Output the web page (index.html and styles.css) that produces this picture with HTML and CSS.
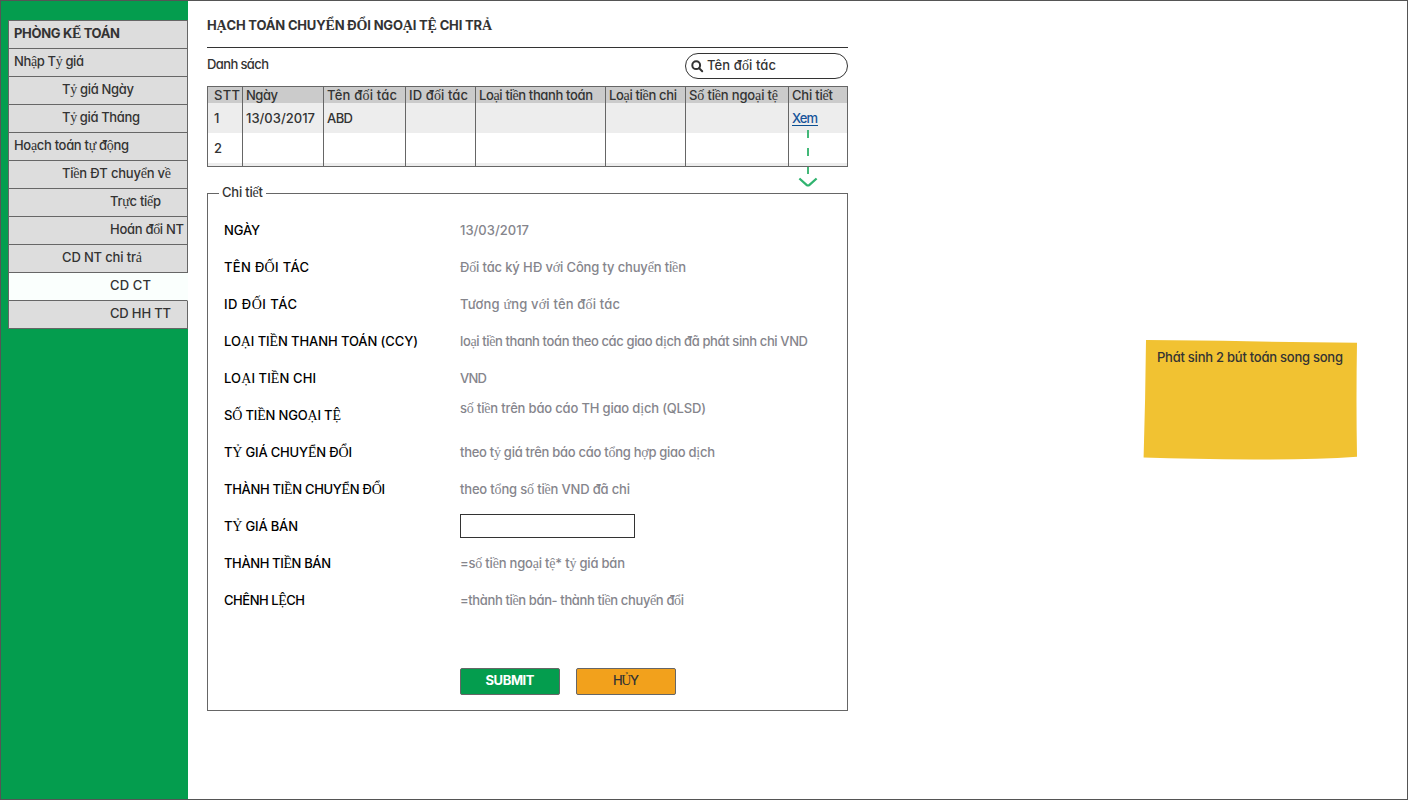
FILE: index.html
```html
<!DOCTYPE html>
<html lang="vi">
<head>
<meta charset="utf-8">
<title>Hạch toán chuyển đổi ngoại tệ chi trả</title>
<link rel="stylesheet" href="styles.css">
</head>
<body>
<div class="page">
  <aside class="sidebar">
    <nav class="menu">
      <div class="item head"><span data-w="106">PHÒNG KẾ TOÁN</span></div>
      <div class="item"><span data-w="70">Nhập Tỷ giá</span></div>
      <div class="item sub"><span data-w="72">Tỷ giá Ngày</span></div>
      <div class="item sub"><span data-w="78">Tỷ giá Tháng</span></div>
      <div class="item"><span data-w="115">Hoạch toán tự động</span></div>
      <div class="item sub"><span data-w="109">Tiền ĐT chuyển về</span></div>
      <div class="item leaf"><span data-w="51">Trực tiếp</span></div>
      <div class="item leaf"><span data-w="74">Hoán đổi NT</span></div>
      <div class="item sub"><span data-w="80">CD NT chi trả</span></div>
      <div class="item leaf active"><span data-w="41">CD CT</span></div>
      <div class="item leaf"><span data-w="61">CD HH TT</span></div>
    </nav>
  </aside>
  <main class="main">
    <h1 class="title"><span data-w="285">HẠCH TOÁN CHUYỂN ĐỔI NGOẠI TỆ CHI TRẢ</span></h1>
    <div class="toolbar">
      <span class="caption" data-w="62">Danh sách</span>
      <div class="search">
        <svg class="glass" viewBox="0 0 13 13"><circle cx="5.2" cy="5.2" r="3.9"/><path d="M8.2 8.2L11.2 11.2"/></svg>
        <span data-w="69">Tên đối tác</span>
      </div>
    </div>
    <div class="table">
      <div class="row header">
        <div><span data-w="26">STT</span></div><div><span data-w="32">Ngày</span></div><div><span data-w="70">Tên đối tác</span></div><div><span data-w="59">ID đối tác</span></div><div><span data-w="114">Loại tiền thanh toán</span></div><div><span data-w="68">Loại tiền chi</span></div><div><span data-w="89">Số tiền ngoại tệ</span></div><div><span data-w="41">Chi tiết</span></div>
      </div>
      <div class="row odd">
        <div>1</div><div><span data-w="69">13/03/2017</span></div><div><span data-w="26">ABD</span></div><div></div><div></div><div></div><div></div><div><a class="link"><span data-w="26">Xem</span></a></div>
      </div>
      <div class="row">
        <div>2</div><div></div><div></div><div></div><div></div><div></div><div></div><div></div>
      </div>
      <div class="row odd last">
        <div></div><div></div><div></div><div></div><div></div><div></div><div></div><div></div>
      </div>
      <svg class="arrow" viewBox="0 0 20 60"><path d="M10 0V8M10 18V26M10 37V44"/><path class="tip" d="M1.4 48.5L8.5 54.8Q10 56 11.5 54.8L18.6 48.5"/></svg>
    </div>
    <section class="detail">
      <div class="legend"><span data-w="41">Chi tiết</span></div>
      <div class="field"><label><span data-w="36">NGÀY</span></label><p><span data-w="69">13/03/2017</span></p></div>
      <div class="field"><label><span data-w="85">TÊN ĐỐI TÁC</span></label><p><span data-w="226">Đối tác ký HĐ với Công ty chuyển tiền</span></p></div>
      <div class="field"><label><span data-w="73">ID ĐỐI TÁC</span></label><p><span data-w="160">Tương ứng với tên đối tác</span></p></div>
      <div class="field"><label><span data-w="194">LOẠI TIỀN THANH TOÁN (CCY)</span></label><p><span data-w="348">loại tiền thanh toán theo các giao dịch đã phát sinh chi VND</span></p></div>
      <div class="field"><label><span data-w="92">LOẠI TIỀN CHI</span></label><p><span data-w="27">VND</span></p></div>
      <div class="field"><label><span data-w="117">SỐ TIỀN NGOẠI TỆ</span></label><p class="raised"><span data-w="246">số tiền trên báo cáo TH giao dịch (QLSD)</span></p></div>
      <div class="field"><label><span data-w="128">TỶ GIÁ CHUYỂN ĐỔI</span></label><p><span data-w="255">theo tỷ giá trên báo cáo tổng hợp giao dịch</span></p></div>
      <div class="field"><label><span data-w="161">THÀNH TIỀN CHUYỂN ĐỔI</span></label><p><span data-w="170">theo tổng số tiền VND đã chi</span></p></div>
      <div class="field"><label><span data-w="74">TỶ GIÁ BÁN</span></label><input class="input" type="text"></div>
      <div class="field"><label><span data-w="107">THÀNH TIỀN BÁN</span></label><p><span data-w="165">=số tiền ngoại tệ* tỷ giá bán</span></p></div>
      <div class="field"><label><span data-w="81">CHÊNH LỆCH</span></label><p><span data-w="224">=thành tiền bán- thành tiền chuyển đổi</span></p></div>
      <div class="actions">
        <button class="btn submit"><span data-w="49">SUBMIT</span></button>
        <button class="btn cancel"><span data-w="26">HỦY</span></button>
      </div>
    </section>
  </main>
  <aside class="notes">
    <div class="note">
      <svg class="paper" viewBox="0 0 216 122"><path d="M3 1L80 1.7Q140 3.4 214 3.7Q213 60 214 117.8Q170 121 110 120.5Q50 120 .6 118.4Q2.4 60 3 1Z"/></svg>
      <span class="note-text" data-w="186">Phát sinh 2 bút toán song song</span>
    </div>
  </aside>
</div>
<script src="main.js"></script>
</body>
</html>
```
FILE: styles.css
```css
* { box-sizing: border-box; }
body {
  margin: 0;
  background: #fff;
  color: #333;
  font: 500 13px/18px Inter, "Liberation Sans", sans-serif;
  font-feature-settings: "cv11" 1;
}
h1, p { margin: 0; font-size: inherit; }
span { white-space: nowrap; }
.alt { font-family: "Liberation Serif", serif; font-size: 14px; font-weight: 400; line-height: 1; }
.page {
  display: flex;
  width: 1408px;
  height: 800px;
  border: 1px solid #555;
  overflow: hidden;
}
.sidebar { width: 187px; padding: 19px 0 0 7px; background: #049d4e; }
.menu { border: solid #666; border-width: 1px 0 0 1px; }
.item {
  height: 28px;
  padding: 3px 0 0 5px;
  background: #ddd;
  border: solid #666;
  border-width: 0 1px 1px 0;
}
.item.head { font-weight: 700; }
.item.sub { padding-left: 53px; }
.item.leaf { padding-left: 101px; }
.item.active { background: #fafffd; border-right-color: #fafffd; }
.main { width: 641px; margin-left: 19px; }
.title {
  height: 47px;
  padding-top: 15px;
  border-bottom: 1px solid #333;
  font-weight: 700;
}
.head .alt, .title .alt { font-weight: 700; }
.toolbar { display: flex; justify-content: space-between; height: 38px; padding-top: 5px; }
.caption { padding-top: 2px; }
.search {
  display: flex;
  gap: 3px;
  width: 163px;
  height: 26px;
  padding: 2px 0 0 5px;
  border: 1px solid #333;
  border-radius: 13px;
}
.glass { width: 13px; height: 13px; margin-top: 4px; fill: none; stroke: #333; stroke-width: 2; stroke-linecap: round; }
.table { position: relative; height: 81px; border: 1px solid #666; border-left: 0; }
.row {
  display: grid;
  grid-template-columns: 35px 81px 82px 70px 130px 80px 103px 59px;
  height: 30px;
  line-height: 30px;
}
.row > div { padding-left: 3px; border-left: 1px solid #666; }
.row > div:first-child { padding-left: 6px; }
.row.odd { background: #ededed; }
.row.header { height: 16px; line-height: 17px; background: #cbcbcb; }
.row.last { height: 3px; }
.link { display: inline-block; height: 23px; line-height: 30px; border-bottom: 1px solid #0b4f91; color: #17549a; vertical-align: top; }
.arrow { position: absolute; left: 591px; top: 43px; width: 20px; height: 60px; fill: none; stroke: #43b878; stroke-width: 2; }
.arrow .tip { stroke: #30b36f; stroke-width: 2.3; }
.detail { position: relative; height: 518px; margin-top: 26px; padding: 17px 0 0 16px; border: 1px solid #666; }
.legend { position: absolute; left: 11px; top: -11px; width: 47px; padding-left: 3px; background: #fff; }
.field { display: grid; grid-template-columns: 236px 1fr; align-items: center; height: 37px; color: #000; }
.field p { color: #85858c; }
.field p.raised { padding-bottom: 14px; }
.input { width: 175px; height: 24px; padding: 0 6px; background: #fff; border: 1px solid #333; }
.actions { display: flex; gap: 16px; margin: 50px 0 0 236px; }
.btn {
  width: 100px;
  height: 27px;
  padding: 0 0 3px;
  border: 1px solid #666;
  border-radius: 2px;
  color: #333;
  font: inherit;
  font-feature-settings: inherit;
}
.submit { background: #049d4e; color: #fff; font-weight: 700; }
.cancel { background: #f2a11c; }
.notes { margin: 338px 0 0 295px; }
.note { position: relative; width: 216px; height: 122px; padding: 9px 0 0 14px; }
.paper { position: absolute; inset: 0; width: 216px; height: 122px; fill: #f1c232; }
.note-text { position: relative; }
```
FILE: main.js
```js
const walker = document.createTreeWalker(document.querySelector(".page"), NodeFilter.SHOW_TEXT);
const nodes = [];
while (walker.nextNode()) nodes.push(walker.currentNode);
for (const node of nodes) {
  if (!node.data.trim()) continue;
  const parts = node.data.split(/([\u1EA0-\u1EF9])/);
  if (parts.length < 2) continue;
  node.replaceWith(...parts.filter(Boolean).map((part) => {
    if (!/^[\u1EA0-\u1EF9]$/.test(part)) return part;
    const el = document.createElement("span");
    el.className = "alt";
    el.textContent = part;
    return el;
  }));
}
// Track each label to its set width.
for (const el of document.querySelectorAll("[data-w]")) {
  const box = el.getBoundingClientRect();
  const spacing = (Number(el.dataset.w) - box.width) / (el.textContent.length - 1);
  el.style.letterSpacing = spacing + "px";
  el.style.marginRight = -spacing + "px";
}
```
